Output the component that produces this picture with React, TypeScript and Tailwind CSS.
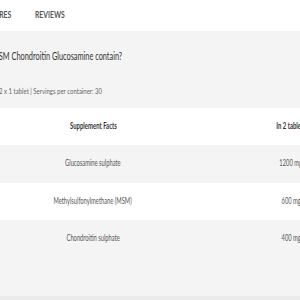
import React from "react";

const rows = [
  ["Glucosamine sulphate", "1200 mg"],
  ["Methylsulfonylmethane (MSM)", "600 mg"],
  ["Chondroitin sulphate", "400 mg"],
];

export default function App() {
  return (
    <div className="w-[300px] h-[300px] overflow-hidden bg-[#f4f4f4] flex flex-col font-['Lato',sans-serif]">
      <div className="h-[31px] shrink-0 bg-white flex items-center text-[8.5px] font-bold text-[#555] whitespace-nowrap">
        <span className="inline-block origin-left scale-x-[0.8] -ml-[22px] w-[57px]">FEATURES</span>
        <span className="inline-block origin-left scale-x-[0.8]">REVIEWS</span>
      </div>
      <div className="flex-1 flex flex-col whitespace-nowrap">
        <div className="h-[25px] mt-[13px] flex items-center text-[10.5px] text-[#333]">
          <span className="inline-block origin-left scale-x-[0.7] -ml-[45px]">What does MSM Chondroitin Glucosamine contain?</span>
        </div>
        <div className="h-[20px] mt-[12px] flex items-center text-[8px] text-[#666]">
          <span className="inline-block origin-left scale-x-[0.75] -ml-[35.5px]">Serving size: 2 x 1 tablet | Servings per container: 30</span>
        </div>
        <div className="mt-[7px] -ml-[6px] w-[396px] flex flex-col">
          <div className="h-[37px] bg-white grid grid-cols-2 items-center text-center text-[8.5px] text-[#333] font-bold">
            <span><span className="inline-block scale-x-[0.7]">Supplement Facts</span></span>
            <span><span className="inline-block scale-x-[0.7]">In 2 tablets</span></span>
          </div>
          {rows.map(([n, v], i) => (
            <div
              key={n}
              className={`h-[37.5px] grid grid-cols-2 items-center text-center text-[8.5px] text-[#555] ${i % 2 === 0 ? "bg-[#f4f4f4]" : "bg-white"}`}
            >
              <span><span className="inline-block scale-x-[0.68]">{n}</span></span>
              <span><span className="inline-block scale-x-[0.68]">{v}</span></span>
            </div>
          ))}
        </div>
      </div>
      <div className="h-[4px] shrink-0 bg-[#ebebeb]" />
    </div>
  );
}
